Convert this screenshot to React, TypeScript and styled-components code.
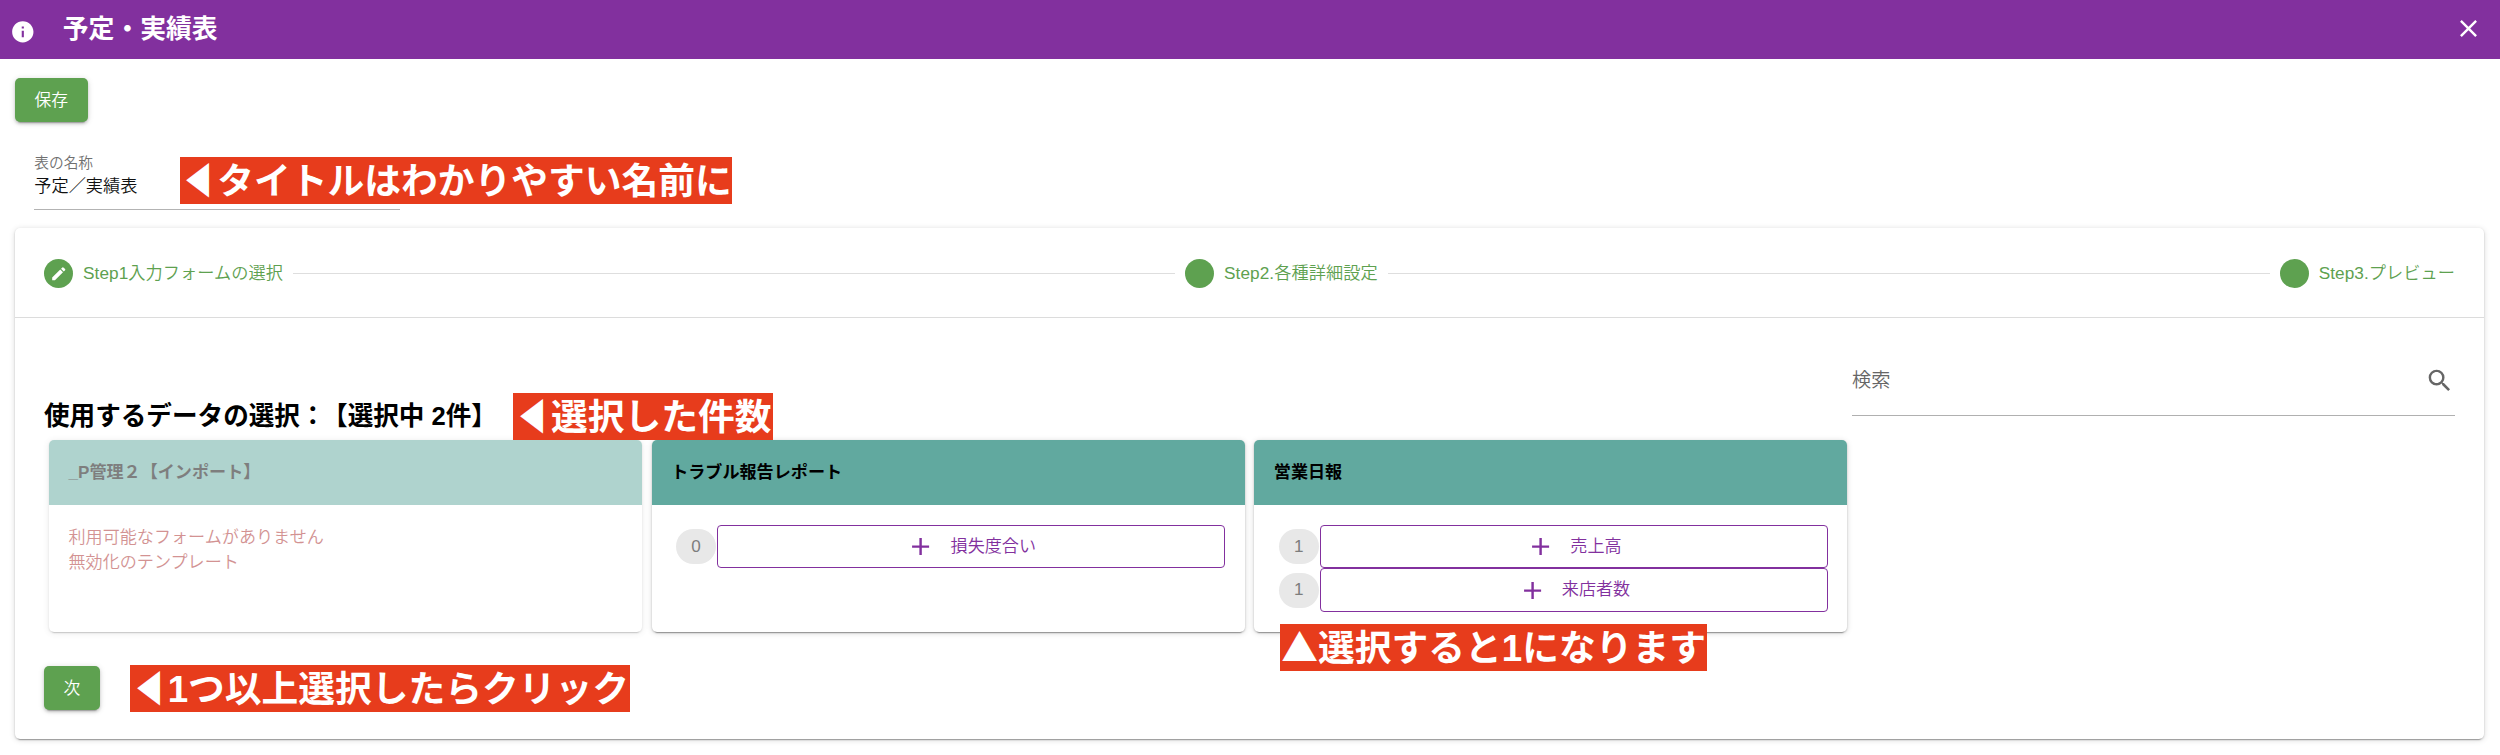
import React from "react";
import styled, { createGlobalStyle } from "styled-components";

const purple = "#82309e";
const green = "#5ea150";

const GlobalStyle = createGlobalStyle`
  *, *::before, *::after { box-sizing: border-box; }
  body {
    margin: 0;
    background: #fff;
    color: #000;
    font-family: "Liberation Sans", "Noto Sans CJK JP", sans-serif;
    font-size: 17.1px;
    font-weight: 350;
    line-height: 25.6px;
  }
`;

const Page = styled.div`
  position: relative;
  width: 2500px;
  height: 755px;
  overflow: hidden;
  background: #fff;
`;

const AppBar = styled.header`
  display: flex;
  align-items: center;
  height: 58.6px;
  padding: 0 17px 0 9.7px;
  background: ${purple};
  color: #fff;
`;

const InfoMark = styled.span`
  display: flex;
  margin: 4px 27.5px 0 0;
`;

const Title = styled.h1`
  flex: 1;
  margin: 0 0 1px;
  font-size: 25.8px;
  line-height: 36px;
  font-weight: 700;
`;

const CloseMark = styled.span`
  display: flex;
  margin-bottom: 2px;
`;

const Icon = styled.svg<{ $size: number }>`
  display: block;
  flex: none;
  width: ${(p) => p.$size}px;
  height: ${(p) => p.$size}px;
  fill: currentColor;
`;

const Content = styled.main`
  padding: 19.4px 15.6px 0 14.6px;
`;

const SolidButton = styled.button<{ $width: number }>`
  display: flex;
  align-items: center;
  justify-content: center;
  width: ${(p) => p.$width}px;
  height: 44px;
  padding: 1.5px 0 0;
  border: 0;
  border-radius: 5px;
  background: ${green};
  color: #fff;
  font: inherit;
  font-size: 16.8px;
  box-shadow: 0 4px 1px -3px rgba(0, 0, 0, 0.2), 0 2px 3px rgba(0, 0, 0, 0.16),
    0 1px 6px rgba(0, 0, 0, 0.14);
`;

const NameField = styled.label`
  display: flex;
  flex-direction: column;
  width: 366px;
  height: 59px;
  margin: 29px 0 0 19.7px;
  padding-top: 0.6px;
  border-bottom: 1.3px solid #b3b3b3;
`;

const FieldLabel = styled.span`
  font-size: 14.7px;
  line-height: 22px;
  color: #707070;
`;

const FieldValue = styled.span`
  font-size: 17.2px;
  line-height: 25px;
  color: #111;
`;

const Panel = styled.section`
  height: 510.5px;
  margin-top: 18.5px;
  border-radius: 5px;
  background: #fff;
  box-shadow: 0 4px 1px -3px rgba(0, 0, 0, 0.22), 0 1px 2px rgba(0, 0, 0, 0.2),
    0 1px 6px rgba(0, 0, 0, 0.14);
`;

const Stepper = styled.div`
  display: flex;
  align-items: center;
  gap: 10px;
  height: 89.4px;
  padding: 1.4px 29.4px 0;
  border-bottom: 1.3px solid #dcdcdc;
  color: ${green};
  font-size: 17.2px;
`;

const Step = styled.div`
  display: flex;
  align-items: center;
  gap: 9.8px;
  white-space: nowrap;
`;

const StepLabel = styled.span`
  letter-spacing: 0.06px;
`;

const StepDot = styled.span`
  display: flex;
  align-items: center;
  justify-content: center;
  width: 29.3px;
  height: 29.3px;
  border-radius: 50%;
  background: ${green};
  color: #fff;
`;

const StepLine = styled.span`
  flex: 1;
  height: 1.3px;
  background: #dedede;
`;

const StepBody = styled.div`
  padding: 0 29.4px;
`;

const SelectHead = styled.div`
  display: flex;
  justify-content: space-between;
  align-items: flex-start;
  height: 122px;
`;

const Heading = styled.h2`
  margin: 80.5px 0 0;
  font-size: 25.6px;
  line-height: 36px;
  font-weight: 700;
  white-space: pre;
  text-spacing-trim: space-all;
`;

const Colon = styled.span`
  letter-spacing: -3.5px;
`;

const SearchField = styled.div`
  display: flex;
  align-items: center;
  justify-content: space-between;
  width: 603px;
  height: 70px;
  margin-top: 28px;
  padding-right: 1px;
  border-bottom: 1.3px solid #b0b0b0;
  font-size: 19.2px;
  color: #666;
`;

const CardRow = styled.div`
  display: flex;
  gap: 9.7px;
  padding-left: 4.9px;
`;

const Card = styled.article<{ $disabled?: boolean }>`
  width: 593px;
  height: 192.3px;
  border-radius: 5px;
  background: #fff;
  overflow: hidden;
  opacity: ${(p) => (p.$disabled ? 0.5 : 1)};
  box-shadow: 0 4px 1px -3px rgba(0, 0, 0, 0.24), 0 1px 2px rgba(0, 0, 0, 0.22),
    0 1px 6px rgba(0, 0, 0, 0.14);
`;

const CardHead = styled.header`
  display: flex;
  align-items: center;
  height: 65.2px;
  padding: 0.8px 19.6px 0;
  background: #61a99f;
  font-weight: 700;
  text-spacing-trim: space-all;
`;

const CardBody = styled.div`
  padding: 19.5px 19.6px;
`;

const Notice = styled.p`
  margin: 0;
  color: #a82828;
`;

const ItemRow = styled.div`
  display: flex;
  align-items: center;
  gap: 1.5px;
  height: 43.8px;
  padding-left: 4.8px;
`;

const Count = styled.span`
  display: flex;
  align-items: center;
  justify-content: center;
  width: 40px;
  height: 34.8px;
  border-radius: 17.4px;
  background: #e8e8e8;
  color: #7d7d7d;
`;

const ItemButton = styled.button`
  display: flex;
  flex: 1;
  align-items: center;
  justify-content: center;
  gap: 15px;
  height: 43.8px;
  padding: 0;
  border: 1.6px solid ${purple};
  border-radius: 4px;
  background: #fff;
  color: ${purple};
  font: inherit;
`;

const Actions = styled.div`
  display: flex;
  margin-top: 33.7px;
`;

const Callout = styled.div<{ $left: number; $top: number; $width: number }>`
  position: absolute;
  left: ${(p) => p.$left}px;
  top: ${(p) => p.$top}px;
  width: ${(p) => p.$width}px;
  height: 46.8px;
  background: #e73c1c;
  color: #fff;
  font-size: 36.75px;
  line-height: 43px;
  font-weight: 700;
  white-space: nowrap;
  text-align: center;
`;

const Pointer = styled.span<{ $narrow?: boolean }>`
  display: inline-block;
  font-family: "Noto Sans CJK JP", sans-serif;
  line-height: 43px;
  transform: ${(p) => (p.$narrow ? "scaleX(0.76)" : "none")};
`;

const paths = {
  info: "M12 2C6.48 2 2 6.48 2 12s4.48 10 10 10 10-4.48 10-10S17.52 2 12 2zm1 15h-2v-6h2v6zm0-8h-2V7h2v2z",
  close:
    "M19 6.41L17.59 5 12 10.59 6.41 5 5 6.41 10.59 12 5 17.59 6.41 19 12 13.41 17.59 19 19 17.59 13.41 12z",
  pencil:
    "M3 17.25V21h3.75L17.81 9.94l-3.75-3.75L3 17.25zM20.71 7.04c.39-.39.39-1.02 0-1.41l-2.34-2.34a.996.996 0 0 0-1.41 0l-1.83 1.83 3.75 3.75 1.83-1.83z",
  search:
    "M15.5 14h-.79l-.28-.27A6.47 6.47 0 0 0 16 9.5 6.5 6.5 0 1 0 9.5 16c1.61 0 3.09-.59 4.23-1.57l.27.28v.79l5 4.99L20.49 19l-4.99-5zm-6 0C7.01 14 5 11.99 5 9.5S7.01 5 9.5 5 14 7.01 14 9.5 11.99 14 9.5 14z",
  plus: "M19 13h-6v6h-2v-6H5v-2h6V5h2v6h6v2z",
};

function Glyph({ name, size }: { name: keyof typeof paths; size: number }) {
  return (
    <Icon $size={size} viewBox="0 0 24 24" aria-hidden="true">
      <path d={paths[name]} />
    </Icon>
  );
}

function FormCard({ title, items }: { title: string; items: { count: number; label: string }[] }) {
  return (
    <Card>
      <CardHead>{title}</CardHead>
      <CardBody>
        {items.map((item) => (
          <ItemRow key={item.label}>
            <Count>{item.count}</Count>
            <ItemButton>
              <Glyph name="plus" size={29.2} />
              <span>{item.label}</span>
            </ItemButton>
          </ItemRow>
        ))}
      </CardBody>
    </Card>
  );
}

export default function App() {
  return (
    <Page lang="ja">
      <GlobalStyle />
      <AppBar>
        <InfoMark>
          <Glyph name="info" size={25.6} />
        </InfoMark>
        <Title>予定・実績表</Title>
        <CloseMark>
          <Glyph name="close" size={29} />
        </CloseMark>
      </AppBar>
      <Content>
        <SolidButton $width={73.4}>保存</SolidButton>
        <NameField>
          <FieldLabel>表の名称</FieldLabel>
          <FieldValue>予定／実績表</FieldValue>
        </NameField>
        <Panel>
          <Stepper>
            <Step>
              <StepDot>
                <Glyph name="pencil" size={17.5} />
              </StepDot>
              <StepLabel>Step1入力フォームの選択</StepLabel>
            </Step>
            <StepLine />
            <Step>
              <StepDot />
              <StepLabel>Step2.各種詳細設定</StepLabel>
            </Step>
            <StepLine />
            <Step>
              <StepDot />
              <StepLabel>Step3.プレビュー</StepLabel>
            </Step>
          </Stepper>
          <StepBody>
            <SelectHead>
              <Heading>
                使用するデータの選択<Colon>：</Colon>【選択中 2件】
              </Heading>
              <SearchField>
                検索
                <Glyph name="search" size={29.3} />
              </SearchField>
            </SelectHead>
            <CardRow>
              <Card $disabled>
                <CardHead>_P管理２【インポート】</CardHead>
                <CardBody>
                  <Notice>利用可能なフォームがありません</Notice>
                  <Notice>無効化のテンプレート</Notice>
                </CardBody>
              </Card>
              <FormCard title="トラブル報告レポート" items={[{ count: 0, label: "損失度合い" }]} />
              <FormCard
                title="営業日報"
                items={[
                  { count: 1, label: "売上高" },
                  { count: 1, label: "来店者数" },
                ]}
              />
            </CardRow>
            <Actions>
              <SolidButton $width={56}>次</SolidButton>
            </Actions>
          </StepBody>
        </Panel>
      </Content>
      <Callout $left={180} $top={156.8} $width={552}>
        <Pointer $narrow>◀</Pointer>タイトルはわかりやすい名前に
      </Callout>
      <Callout $left={513} $top={393.2} $width={259.5}>
        <Pointer $narrow>◀</Pointer>選択した件数
      </Callout>
      <Callout $left={1280.4} $top={624} $width={426.6}>
        <Pointer>▲</Pointer>選択すると1になります
      </Callout>
      <Callout $left={130} $top={665} $width={500}>
        <Pointer $narrow>◀</Pointer>1つ以上選択したらクリック
      </Callout>
    </Page>
  );
}
